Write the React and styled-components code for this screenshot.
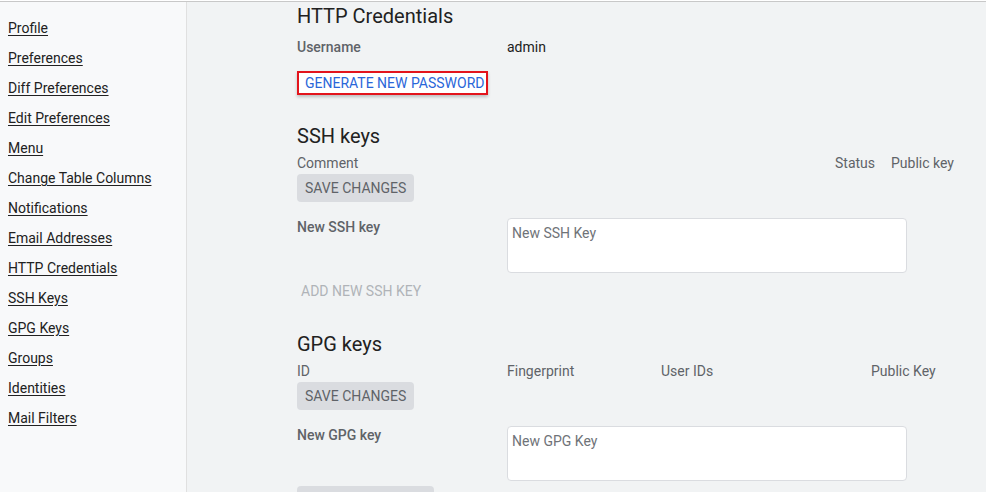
import styled, { createGlobalStyle } from "styled-components";

const GlobalStyle = createGlobalStyle`
  html, body {
    margin: 0;
    padding: 0;
    background: #ffffff;
    font-family: Roboto, "Liberation Sans", Arial, sans-serif;
    font-size: 14px;
    color: #212121;
  }
`;

const Page = styled.div`
  margin-top: 1px;
  border-top: 1px solid #c8c8c8;
  display: grid;
  grid-template-columns: 187px 1fr;
  height: 490px;
  overflow: hidden;
  background: #f1f3f4;
`;

const Sidebar = styled.nav`
  background: #f8f9fa;
  border-right: 1px solid #e0e0e0;
  padding: 16px 0 0 8px;
  display: flex;
  flex-direction: column;
  gap: 10px;
`;

const NavLink = styled.a`
  color: #212121;
  text-decoration: underline;
  text-underline-offset: 2px;
  line-height: 20px;
  font-size: 14px;
  width: fit-content;
`;

const Main = styled.main`
  padding-left: 110px;
  display: flex;
  flex-direction: column;
  align-items: flex-start;
`;

const Heading = styled.h2`
  margin: ${(p) => p.$top || 0}px 0 0;
  font-size: 20px;
  font-weight: 400;
  line-height: 28px;
  color: #212121;
`;

const Row = styled.div`
  display: grid;
  grid-template-columns: 210px auto;
  align-items: ${(p) => (p.$top ? "start" : "center")};
  margin-top: ${(p) => p.$mt || 0}px;
  line-height: 20px;
`;

const Label = styled.span`
  font-weight: 500;
  color: #5f6368;
  line-height: ${(p) => (p.$tight ? "18px" : "20px")};
`;

const Value = styled.span`
  color: #212121;
`;

const LinkButton = styled.button`
  margin-top: 14px;
  width: 191px;
  height: 24px;
  padding: 0 0 0 6px;
  border: 2px solid #e3141c;
  background: #ffffff;
  color: #2a66d9;
  font: inherit;
  font-size: 14px;
  white-space: nowrap;
  box-shadow: 0 2px 3px rgba(0, 0, 0, 0.22);
  text-align: left;
`;

const TableHead = styled.div`
  align-self: stretch;
  display: grid;
  grid-template-columns: ${(p) => p.$cols};
  margin-top: 3px;
  line-height: 20px;
  color: #5f6368;
`;

const GrayButton = styled.button`
  margin-top: ${(p) => p.$mt || 1}px;
  height: 28px;
  border: none;
  border-radius: 4px;
  background: #dadce0;
  color: #5f6368;
  font: inherit;
  font-size: 14px;
  padding: 0 8px;
  white-space: nowrap;
`;

const FlatButton = styled.button`
  margin-top: 4px;
  height: 28px;
  border: none;
  background: transparent;
  color: #b0b3b8;
  font: inherit;
  font-size: 14px;
  padding: 0 4px;
  white-space: nowrap;
`;

const KeyInput = styled.textarea`
  width: 400px;
  height: 55px;
  box-sizing: border-box;
  border: 1px solid #dadce0;
  border-radius: 4px;
  background: #ffffff;
  font: inherit;
  font-size: 14px;
  padding: 4px;
  resize: none;
  line-height: 20px;
  &::placeholder {
    color: #6f7378;
  }
`;

const links = [
  "Profile",
  "Preferences",
  "Diff Preferences",
  "Edit Preferences",
  "Menu",
  "Change Table Columns",
  "Notifications",
  "Email Addresses",
  "HTTP Credentials",
  "SSH Keys",
  "GPG Keys",
  "Groups",
  "Identities",
  "Mail Filters",
];

export default function App() {
  return (
    <>
      <GlobalStyle />
      <Page>
        <Sidebar>
          {links.map((l) => (
            <NavLink key={l} href="#">
              {l}
            </NavLink>
          ))}
        </Sidebar>
        <Main>
          <Heading>HTTP Credentials</Heading>
          <Row $mt={7}>
            <Label>Username</Label>
            <Value>admin</Value>
          </Row>
          <LinkButton>GENERATE NEW PASSWORD</LinkButton>

          <Heading $top={27}>SSH keys</Heading>
          <TableHead $cols="538px 56px auto">
            <span>Comment</span>
            <span>Status</span>
            <span>Public key</span>
          </TableHead>
          <GrayButton>SAVE CHANGES</GrayButton>
          <Row $top $mt={16}>
            <Label $tight>New SSH key</Label>
            <KeyInput placeholder="New SSH Key" />
          </Row>
          <FlatButton disabled>ADD NEW SSH KEY</FlatButton>

          <Heading $top={25}>GPG keys</Heading>
          <TableHead $cols="210px 154px 210px auto">
            <span>ID</span>
            <span>Fingerprint</span>
            <span>User IDs</span>
            <span>Public Key</span>
          </TableHead>
          <GrayButton>SAVE CHANGES</GrayButton>
          <Row $top $mt={16}>
            <Label $tight>New GPG key</Label>
            <KeyInput placeholder="New GPG Key" />
          </Row>
          <GrayButton $mt={5}>ADD NEW GPG KEY</GrayButton>
        </Main>
      </Page>
    </>
  );
}
